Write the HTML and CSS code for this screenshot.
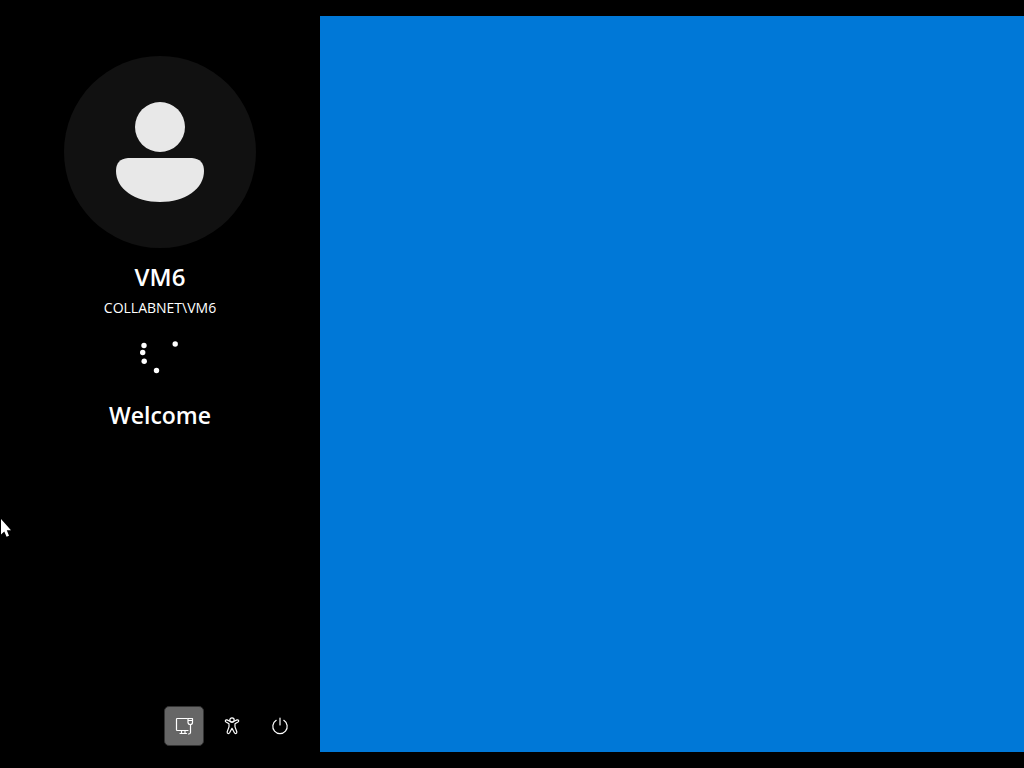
FILE: index.html
```html
<!DOCTYPE html>
<html lang="en">
<head>
<meta charset="utf-8">
<title>Welcome</title>
<link rel="stylesheet" href="styles.css">
</head>
<body>
<div class="screen">
  <section class="panel">
    <main class="account">
      <div class="avatar">
        <svg width="88" height="100" viewBox="0 0 88 100" aria-hidden="true">
          <circle cx="44" cy="25" r="25"/>
          <path d="M12 56H76Q88 57 88 69C88 87 69 100 44 100S0 87 0 69Q0 57 12 56Z"/>
        </svg>
      </div>
      <h1 class="name">VM6</h1>
      <p class="domain">COLLABNET\VM6</p>
      <svg class="spinner" width="40" height="40" viewBox="0 0 40 40" aria-hidden="true">
        <circle cx="4" cy="9.5" r="2.7"/>
        <circle cx="2.7" cy="16.5" r="2.7"/>
        <circle cx="4.2" cy="25.2" r="2.7"/>
        <circle cx="16.5" cy="34.5" r="2.7"/>
        <circle cx="35.2" cy="8" r="2.7"/>
      </svg>
      <p class="status">Welcome</p>
    </main>
    <nav class="tools">
      <button class="tool active" type="button" aria-label="Network">
        <svg width="20" height="20" viewBox="0 0 20 20" aria-hidden="true">
          <path d="M13 2.5H3.2Q2.5 2.5 2.5 3.2V13.8Q2.5 14.5 3.2 14.5H14M16.5 8.5V16.5Q16.5 18 14.5 18M6 17.5H12.5M7.5 14.5V17.5M11 14.5V17.5M14 2.5H18.5V6.5Q18.5 8.5 16.3 8.5T14 6.5ZM14 4.5H18.5"/>
        </svg>
      </button>
      <button class="tool" type="button" aria-label="Accessibility">
        <svg width="20" height="20" viewBox="0 0 20 20" aria-hidden="true">
          <circle cx="10" cy="4" r="2.2"/>
          <path d="M7.9 5.2L5 3.9Q3.8 3.6 3.4 4.5T4 6L7 7.7V10.9L5.2 15.8Q5 17.2 6 17.5T7.6 16.8L10 12.3L12.4 16.8Q13 17.9 14 17.5T14.8 15.8L13 10.9V7.7L16 6Q17 5.4 16.6 4.5T15 3.9L12.1 5.2Q10 7.1 7.9 5.2Z"/>
        </svg>
      </button>
      <button class="tool" type="button" aria-label="Power">
        <svg width="20" height="20" viewBox="0 0 20 20" aria-hidden="true">
          <path d="M10 2V9M6.2 4.3A7.2 7.2 0 1 0 13.8 4.3"/>
        </svg>
      </button>
    </nav>
  </section>
  <div class="backdrop"></div>
  <svg class="cursor" width="12" height="19" viewBox="0 0 12 19" aria-hidden="true">
    <path d="M1 0V15.5L4.3 12.5L6.6 17.8L9 16.7L6.8 11.3H11Z"/>
  </svg>
</div>
</body>
</html>
```
FILE: styles.css
```css
* {
  box-sizing: border-box;
}

body {
  margin: 0;
  background: #000;
  color: #fff;
  font-family: "Open Sans", "Noto Sans", sans-serif;
}

.screen {
  position: relative;
  display: flex;
  min-height: 100vh;
  padding: 16px 0;
  overflow: hidden;
}

.panel {
  display: flex;
  flex: 0 0 320px;
  flex-direction: column;
  justify-content: space-between;
  padding: 40px 20px 6px;
}

.account {
  display: flex;
  flex-direction: column;
  align-items: center;
}

.avatar {
  display: grid;
  place-items: center;
  width: 192px;
  height: 192px;
  border-radius: 50%;
  background: #111;
}

.avatar svg {
  fill: #e8e8e8;
}

.name,
.status {
  margin: 0;
  font-weight: 600;
  line-height: 32px;
}

.name {
  margin-top: 13px;
  font-size: 24px;
}

.domain {
  margin: 5px 0 0;
  font-size: 14px;
  line-height: 20px;
}

.spinner {
  margin-top: 18px;
  fill: #fff;
}

.status {
  margin-top: 23px;
  font-size: 23px;
}

.tools {
  display: flex;
  justify-content: flex-end;
  gap: 8px;
}

.tool {
  display: grid;
  place-items: center;
  width: 40px;
  height: 40px;
  padding: 0;
  border: 1px solid transparent;
  border-radius: 5px;
  background: transparent;
}

.tool.active {
  border-color: #333;
  background: #666;
}

.tool svg {
  fill: none;
  stroke: #fff;
  stroke-width: 1.2;
  stroke-linecap: round;
  stroke-linejoin: round;
}

.backdrop {
  flex: 1;
  background: #0078d7;
}

.cursor {
  position: absolute;
  top: 519px;
  left: 0;
  fill: #fff;
}
```
